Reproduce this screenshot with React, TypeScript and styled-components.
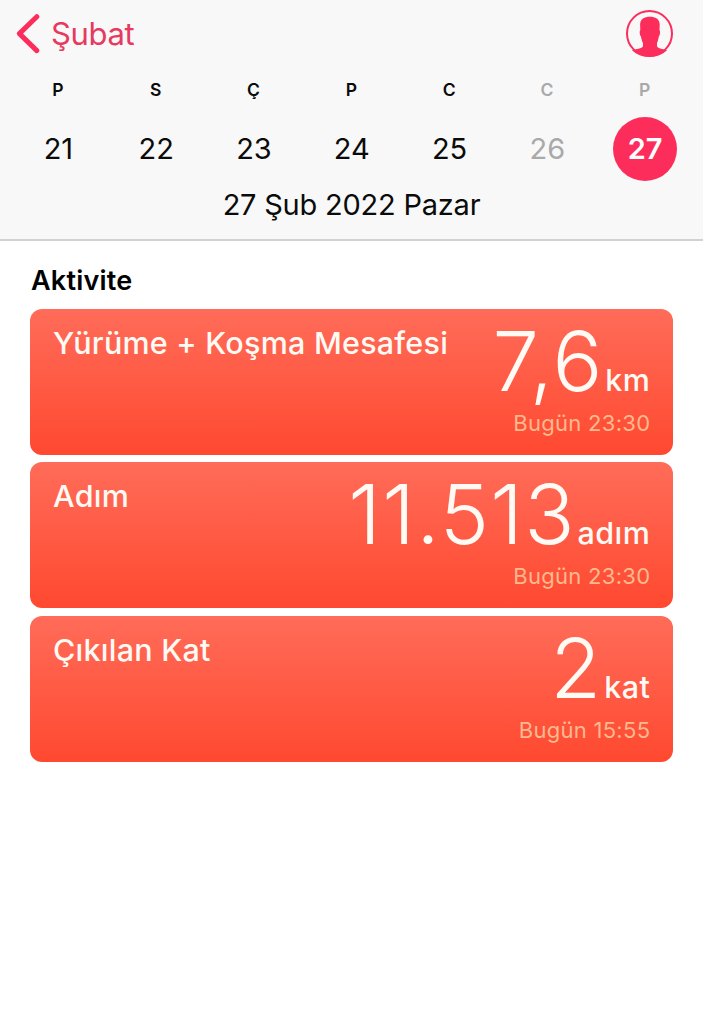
import styled, { createGlobalStyle } from "styled-components";

const days = [
  { letter: "P", date: 21 },
  { letter: "S", date: 22 },
  { letter: "Ç", date: 23 },
  { letter: "P", date: 24 },
  { letter: "C", date: 25 },
  { letter: "C", date: 26, weekend: true },
  { letter: "P", date: 27, weekend: true, selected: true },
];

const activities = [
  { title: "Yürüme + Koşma Mesafesi", value: "7,6", unit: "km", time: "Bugün 23:30" },
  { title: "Adım", value: "11.513", unit: "adım", time: "Bugün 23:30" },
  { title: "Çıkılan Kat", value: "2", unit: "kat", time: "Bugün 15:55" },
];

const App = () => {
  return (
    <>
      <GlobalStyle />
      <Header>
        <NavBar>
          <BackButton>
            <svg width="26" height="42" viewBox="0 0 26 42" fill="none">
              <path
                d="M22.8 3.7 L5.4 20.6 L22.8 37.6"
                stroke="#fd2d5b"
                strokeWidth="5"
                strokeLinecap="round"
                strokeLinejoin="round"
              />
            </svg>
            <BackLabel>Şubat</BackLabel>
          </BackButton>
          <ProfileIcon />
        </NavBar>

        <Week>
          {days.map((day) => (
            <Day key={day.date}>
              <DayLetter $muted={day.weekend}>{day.letter}</DayLetter>
              <DayNumber $muted={day.weekend} $selected={day.selected}>
                {day.date}
              </DayNumber>
            </Day>
          ))}
        </Week>

        <FullDate>27 Şub 2022 Pazar</FullDate>
      </Header>

      <Main>
        <SectionTitle>Aktivite</SectionTitle>
        <CardList>
          {activities.map((item) => (
            <Card key={item.title}>
              <CardTitle>{item.title}</CardTitle>
              <Reading>
                <Amount>
                  <Value>{item.value}</Value>
                  <Unit>{item.unit}</Unit>
                </Amount>
                <Time>{item.time}</Time>
              </Reading>
            </Card>
          ))}
        </CardList>
      </Main>
    </>
  );
};

const ProfileIcon = () => (
  <svg width="48" height="48" viewBox="0 0 48 48">
    <circle cx="23.5" cy="23.5" r="22.5" fill="none" stroke="#fd2d5b" strokeWidth="2" />
    <path
      d="M23.9 6.8 C29.4 6.8 33.6 9 33.7 14.5 L33.5 20.2 C34.6 20.8 34 25.4 32.8 26.6 C32.4 29.6 31.8 31.6 31 33.2 L31 36.2 C31.8 38.6 37.4 38.9 41 40.2 C36.2 44.8 30.6 46.8 23.5 46.8 C16.4 46.8 10.8 44.8 6 40.2 C9.6 38.9 16.2 38.6 17 36.2 L17 33.2 C16.1 31.6 15.4 29.6 15 26.6 C13.8 25.4 13.2 20.8 14.3 20.2 L14.1 14.5 C14.2 9 18.4 6.8 23.9 6.8 Z"
      fill="#fd2d5b"
    />
  </svg>
);

const GlobalStyle = createGlobalStyle`
  * {
    box-sizing: border-box;
  }

  body {
    margin: 0;
    background: #fff;
    color: #0b0b0b;
    font-family: Inter, "Noto Sans", sans-serif;
  }
`;

const Header = styled.header`
  height: 241px;
  background: #f8f8f8;
  border-bottom: 2px solid #d2d2d2;
`;

const NavBar = styled.div`
  display: flex;
  justify-content: space-between;
  height: 79px;
  padding: 10px 29px 0 14px;
`;

const BackButton = styled.div`
  display: flex;
  align-items: flex-start;
  padding-top: 3px;
`;

const BackLabel = styled.span`
  margin-left: 11px;
  font-size: 31px;
  letter-spacing: -0.35px;
  line-height: 42px;
  color: #e63a60;
`;

const Week = styled.div`
  display: grid;
  grid-template-columns: repeat(7, 97.8px);
  margin-left: 9px;
`;

const Day = styled.div`
  display: flex;
  flex-direction: column;
  align-items: center;
`;

const DayLetter = styled.span<{ $muted?: boolean }>`
  font-size: 17.5px;
  font-weight: 600;
  line-height: 22px;
  color: ${({ $muted }) => ($muted ? "#a9a9a9" : "#0b0b0b")};
`;

const DayNumber = styled.span<{ $muted?: boolean; $selected?: boolean }>`
  display: flex;
  align-items: center;
  justify-content: center;
  width: 64px;
  height: 64px;
  margin-top: 16px;
  padding: 0 0 2px 1px;
  border-radius: 50%;
  font-size: 29px;
  font-weight: ${({ $selected }) => ($selected ? 600 : 400)};
  color: ${({ $muted, $selected }) => ($selected ? "#fff" : $muted ? "#a9a9a9" : "#0b0b0b")};
  background: ${({ $selected }) => ($selected ? "#fd2d5b" : "transparent")};
`;

const FullDate = styled.div`
  margin-top: 6px;
  font-size: 29px;
  letter-spacing: -0.22px;
  line-height: 36px;
  text-align: center;
`;

const Main = styled.main`
  padding: 21px 30px 0;
`;

const SectionTitle = styled.h2`
  margin: 0 0 9px 1px;
  font-size: 27px;
  font-weight: 600;
  letter-spacing: 0.2px;
  line-height: 38px;
  color: #000;
`;

const CardList = styled.div`
  display: flex;
  flex-direction: column;
  gap: 7.4px;
`;

const Card = styled.section`
  display: flex;
  justify-content: space-between;
  height: 146px;
  padding: 16px 23px 0;
  border-radius: 12px;
  background: linear-gradient(#ff6c59, #ff4930);
  color: #fffaf4;
`;

const CardTitle = styled.h3`
  margin: 0;
  font-size: 30.5px;
  font-weight: 500;
  letter-spacing: 0.24px;
  line-height: 36px;
  white-space: nowrap;
`;

const Reading = styled.div`
  display: flex;
  flex-direction: column;
  align-items: flex-end;
`;

const Amount = styled.div`
  display: flex;
  align-items: baseline;
  height: 72px;
`;

const Value = styled.span`
  font-size: 83px;
  font-weight: 300;
  letter-spacing: 1.3px;
  line-height: 72px;
`;

const Unit = styled.span`
  margin: 0 -0.4px 0 1.6px;
  font-size: 30.5px;
  font-weight: 500;
  letter-spacing: 0.5px;
  line-height: 36px;
`;

const Time = styled.span`
  margin: 12px -0.3px 0 0;
  font-size: 22px;
  letter-spacing: 0.28px;
  line-height: 28px;
  color: #ffb98e;
`;

export default App;
